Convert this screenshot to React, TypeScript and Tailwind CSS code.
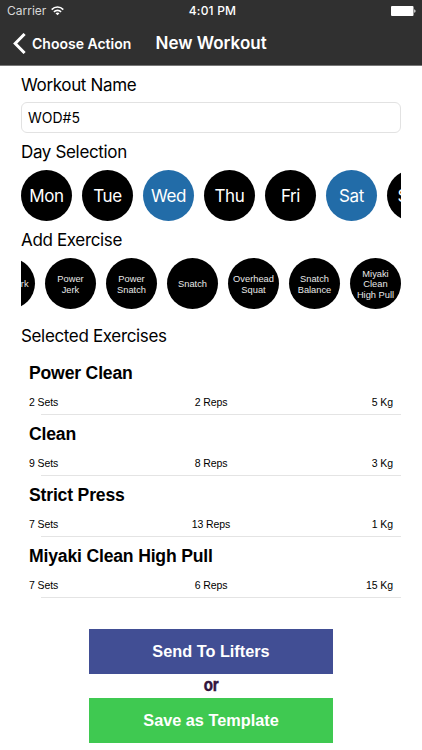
import clsx from "clsx";

const days = [
  { label: "Mon", selected: false },
  { label: "Tue", selected: false },
  { label: "Wed", selected: true },
  { label: "Thu", selected: false },
  { label: "Fri", selected: false },
  { label: "Sat", selected: true },
  { label: "Sun", selected: false },
];

const exercises = [
  ["Split Jerk"],
  ["Power", "Jerk"],
  ["Power", "Snatch"],
  ["Snatch"],
  ["Overhead", "Squat"],
  ["Snatch", "Balance"],
  ["Miyaki", "Clean", "High Pull"],
];

const selectedExercises = [
  { name: "Power Clean", sets: 2, reps: 2, weight: 5 },
  { name: "Clean", sets: 9, reps: 8, weight: 3 },
  { name: "Strict Press", sets: 7, reps: 13, weight: 1 },
  { name: "Miyaki Clean High Pull", sets: 7, reps: 6, weight: 15 },
];

function StatusBar() {
  return (
    <div className="grid h-[22px] grid-cols-3 items-center pl-[7px] pr-[6px] text-[12px] leading-none">
      <div className="flex items-center gap-[5px]">
        <span className="text-[#d8d8d8]">Carrier</span>
        <svg width="13" height="10" viewBox="0 0 13 10" fill="none" stroke="#fff" strokeWidth="1.6">
          <path d="M0.7 3.6C4 0.2 9 0.2 12.3 3.6" />
          <path d="M2.9 5.9C5 3.8 8 3.8 10.1 5.9" />
          <path d="M4.5 7.2C5.7 6.2 7.3 6.2 8.5 7.2L6.5 9.3Z" fill="#fff" stroke="none" />
        </svg>
      </div>
      <span className="pl-[2px] text-center font-medium tracking-[0.2px]">4:01 PM</span>
      <svg className="justify-self-end" width="25" height="10" viewBox="0 0 25 10">
        <rect width="22.5" height="10" rx="1" fill="#fff" />
        <path d="M23.3 3.2C24.9 3.7 24.9 6.3 23.3 6.8Z" fill="#fff" />
      </svg>
    </div>
  );
}

function Header() {
  return (
    <header className="h-[66px] border-b border-[#777] bg-[#303030] text-white">
      <StatusBar />
      <div className="flex h-[43px] items-center pl-[13px]">
        <svg width="13" height="21" viewBox="0 0 13 21" fill="none" stroke="#fff" strokeWidth="3">
          <path d="M11.6 1L2.2 10.5L11.6 20" />
        </svg>
        <span className="ml-[6px] w-[123px] whitespace-nowrap text-[14px] font-semibold">Choose Action</span>
        <h1 className="whitespace-nowrap pl-[0.5px] text-[17px] font-semibold">New Workout</h1>
      </div>
    </header>
  );
}

function Label({ children }: { children: string }) {
  return <h2 className="text-[17px] leading-[22px] tracking-[-0.35px]">{children}</h2>;
}

export default function App() {
  return (
    <div className="h-[750px] w-[422px] overflow-hidden bg-white font-['Inter',sans-serif] text-black">
      <Header />
      <main className="px-[21px] pt-[8px]">
        <Label>Workout Name</Label>
        <input
          className="mt-[6px] block h-[31px] w-[380px] rounded-[6px] border border-[#e2e2e2] px-[6px] text-[14px] outline-none"
          defaultValue="WOD#5"
        />

        <div className="mt-[8px]">
          <Label>Day Selection</Label>
        </div>
        <div className="mt-[7px] flex gap-[10px] overflow-hidden">
          {days.map((d) => (
            <button
              key={d.label}
              className={clsx(
                "flex size-[51px] shrink-0 items-center justify-center rounded-full pt-[2px] text-[17px] tracking-[-0.4px] text-white",
                d.selected ? "bg-[#226ca8]" : "bg-black"
              )}
            >
              {d.label}
            </button>
          ))}
        </div>

        <div className="mt-[8px]">
          <Label>Add Exercise</Label>
        </div>
        <div className="mt-[7px] flex justify-end gap-[10px] overflow-hidden font-['Liberation_Sans',sans-serif]">
          {exercises.map((lines) => (
            <button
              key={lines.join(" ")}
              className="flex size-[51px] shrink-0 flex-col items-center justify-center whitespace-nowrap rounded-full bg-black pt-[2px] text-[9.3px] leading-[10.5px] text-[#e8e8e8]"
            >
              {lines.map((line) => (
                <span key={line}>{line}</span>
              ))}
            </button>
          ))}
        </div>

        <div className="mt-[16px]">
          <Label>Selected Exercises</Label>
        </div>
        <ul className="mt-[7px] font-['Liberation_Sans',sans-serif]">
          {selectedExercises.map((e) => (
            <li key={e.name} className="h-[61px]">
              <div className="flex h-[60px] flex-col justify-between px-2 pt-[8px] pb-[5px]">
                <h3 className="text-[17.6px] leading-[22px] font-bold tracking-[-0.18px]">{e.name}</h3>
                <div className="grid grid-cols-3 text-[10.5px] leading-[13px] tracking-[-0.1px]">
                  <span>{e.sets} Sets</span>
                  <span className="text-center">{e.reps} Reps</span>
                  <span className="text-right">{e.weight} Kg</span>
                </div>
              </div>
              <div className="ml-5 h-px bg-[#e4e4e4]" />
            </li>
          ))}
        </ul>

        <div className="mx-auto mt-[31px] flex w-[244px] flex-col font-['Liberation_Sans',sans-serif]">
          <button className="h-[45px] bg-[#414e94] text-[16.3px] font-bold text-white">Send To Lifters</button>
          <span className="flex h-[24px] scale-x-[0.84] items-center justify-center pb-px text-[18px] font-bold tracking-[-0.4px] text-[#32143c] [-webkit-text-stroke:0.5px_#32143c]">
            or
          </span>
          <button className="h-[45px] bg-[#3fc951] text-[16.3px] font-bold text-white">Save as Template</button>
        </div>
      </main>
    </div>
  );
}
